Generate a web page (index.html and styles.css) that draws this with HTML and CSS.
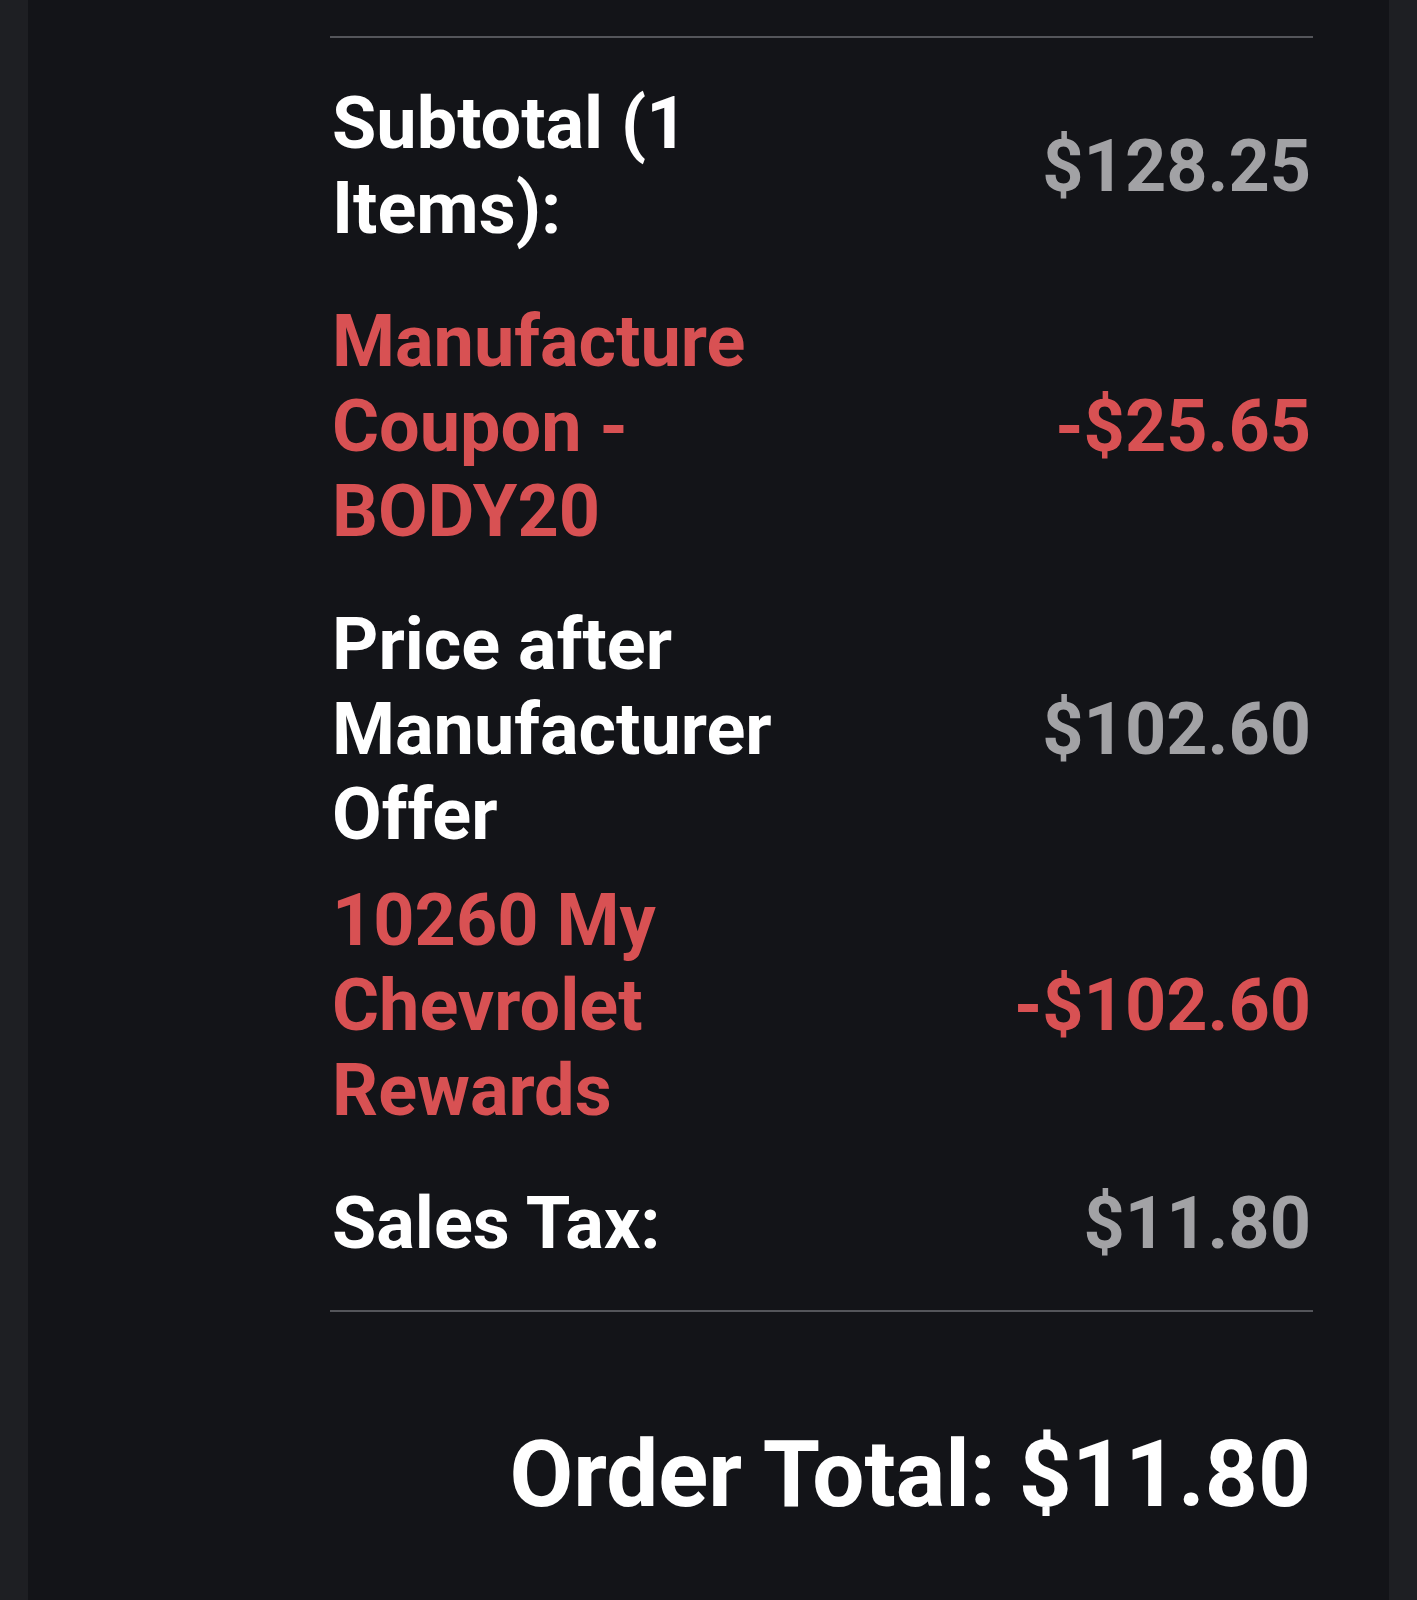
FILE: index.html
```html
<!DOCTYPE html>
<html lang="en">
<head>
    <meta charset="UTF-8">
    <meta name="viewport" content="width=device-width, initial-scale=1.0">
    <title>Order Summary</title>
    <link rel="stylesheet" href="styles.css">
</head>
<body>

    <div class="panel">
        <div class="summary">
            <hr class="divider">

            <!-- Price breakdown -->
            <div class="row">
                <div class="label">Subtotal (1 Items):</div>
                <div class="value">$128.25</div>
            </div>
            <div class="row discount">
                <div class="label">Manufacture Coupon - BODY20</div>
                <div class="value">-$25.65</div>
            </div>
            <div class="row tight">
                <div class="label">Price after Manufacturer Offer</div>
                <div class="value">$102.60</div>
            </div>
            <div class="row discount">
                <div class="label">10260 My Chevrolet Rewards</div>
                <div class="value">-$102.60</div>
            </div>
            <div class="row">
                <div class="label">Sales Tax:</div>
                <div class="value">$11.80</div>
            </div>

            <hr class="divider bottom">

            <div class="total">Order Total: $11.80</div>
        </div>
    </div>

</body>
</html>
```

FILE: styles.css
```css
* {
    box-sizing: border-box;
}

body {
    margin: 0;
    padding: 0;
    background-color: #1e1f23;
    font-family: Roboto, "Liberation Sans", sans-serif;
    font-weight: 700;
    color: #fff;
}

.panel {
    margin: 0 28px;
    min-height: 1600px;
    background-color: #131418;
}

.summary {
    margin-left: 302px;
    margin-right: 76px;
    padding-top: 36px;
}

.divider {
    margin: 0;
    border: 0;
    height: 2px;
    background-color: #54555a;
}

.divider.bottom {
    margin-top: 44px;
}

.row {
    display: flex;
    align-items: center;
    justify-content: space-between;
    padding: 0 2px;
    margin-top: 48px;
    font-size: 72px;
    line-height: 85px;
}

.row:first-of-type {
    margin-top: 43px;
}

/* the rewards row sits closer to the one above it */
.row.tight + .row {
    margin-top: 21px;
}

.label {
    width: 50%;
}

.value {
    text-align: right;
    color: #a2a2a5;
}

.discount .label,
.discount .value {
    color: #d85153;
}

.total {
    margin-top: 106px;
    padding-right: 2px;
    text-align: right;
    font-size: 92.5px;
    line-height: 113px;
}
```
